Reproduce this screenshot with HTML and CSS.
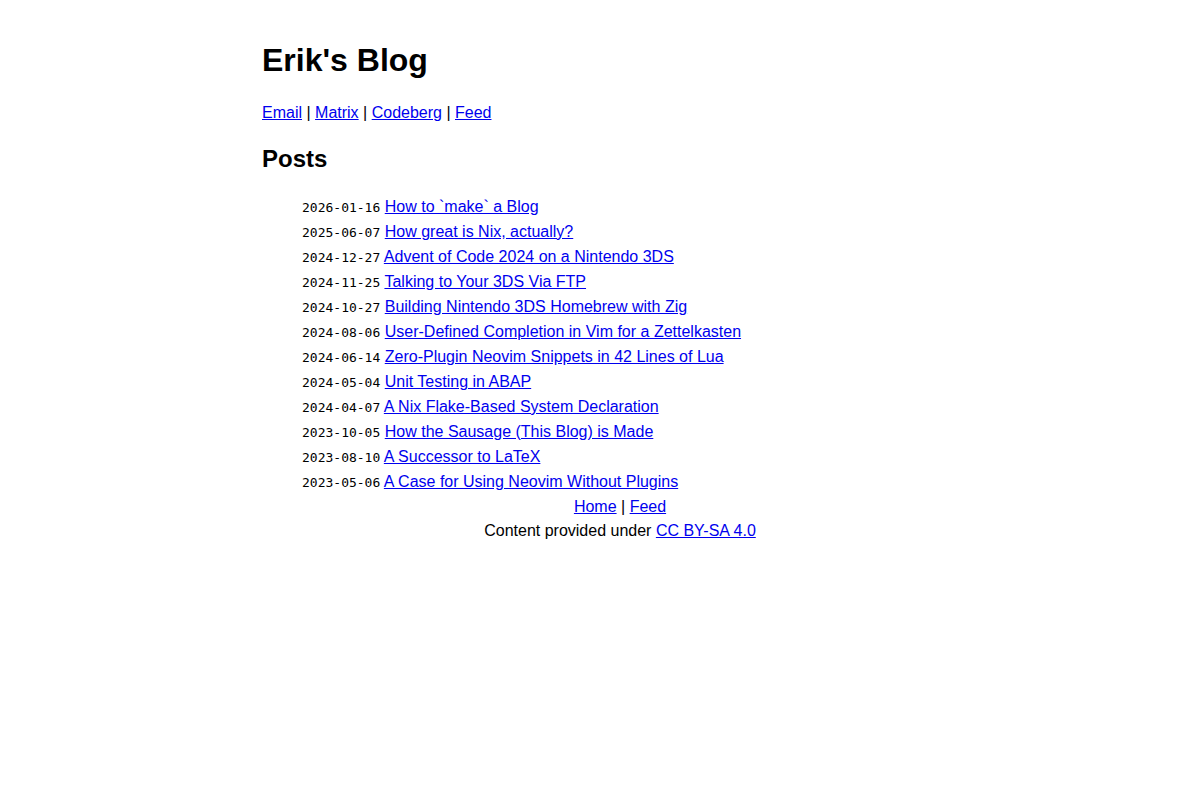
FILE: index.html
```html
<!DOCTYPE html>
<html lang="en">
<head>
<meta charset="utf-8">
<title>Erik's Blog</title>
<link rel="stylesheet" href="styles.css">
</head>
<body>
<main class="page">
  <h1 class="title">Erik's Blog</h1>
  <p class="links"><a href="#">Email</a> | <a href="#">Matrix</a> | <a href="#">Codeberg</a> | <a href="#">Feed</a></p>
  <h2 class="section">Posts</h2>
  <ul class="posts">
    <li><code>2026-01-16</code> <a href="#">How to `make` a Blog</a></li>
    <li><code>2025-06-07</code> <a href="#">How great is Nix, actually?</a></li>
    <li><code>2024-12-27</code> <a href="#">Advent of Code 2024 on a Nintendo 3DS</a></li>
    <li><code>2024-11-25</code> <a href="#">Talking to Your 3DS Via FTP</a></li>
    <li><code>2024-10-27</code> <a href="#">Building Nintendo 3DS Homebrew with Zig</a></li>
    <li><code>2024-08-06</code> <a href="#">User-Defined Completion in Vim for a Zettelkasten</a></li>
    <li><code>2024-06-14</code> <a href="#">Zero-Plugin Neovim Snippets in 42 Lines of Lua</a></li>
    <li><code>2024-05-04</code> <a href="#">Unit Testing in ABAP</a></li>
    <li><code>2024-04-07</code> <a href="#">A Nix Flake-Based System Declaration</a></li>
    <li><code>2023-10-05</code> <a href="#">How the Sausage (This Blog) is Made</a></li>
    <li><code>2023-08-10</code> <a href="#">A Successor to LaTeX</a></li>
    <li><code>2023-05-06</code> <a href="#">A Case for Using Neovim Without Plugins</a></li>
    <footer class="footer">
      <div><a href="#">Home</a> | <a href="#">Feed</a></div>
      <div>Content provided under <a href="#">CC BY-SA 4.0</a></div>
    </footer>
  </ul>
</main>
</body>
</html>
```

FILE: styles.css
```css
html, body {
  margin: 0;
  padding: 0;
  background: #fff;
}
body {
  font-family: "Liberation Sans", Arial, sans-serif;
  font-size: 16px;
  line-height: 1.5;
  color: #000;
}
.page {
  width: 676px;
  margin: 0 auto;
  padding: 8px 0;
}
a {
  color: #0000ee;
}
.title {
  font-size: 32px;
  font-weight: bold;
  margin: 28px 0 17px;
}
.links {
  margin: 17px 0 16px;
}
.section {
  font-size: 24px;
  font-weight: bold;
  margin: 16px 0;
}
.posts {
  list-style: none;
  padding-left: 40px;
  margin: 16.5px 0 16px;
}
.posts li {
  line-height: 25px;
}
.posts code {
  font-family: "DejaVu Sans Mono", monospace;
  font-size: 13px;
  line-height: 1;
}
.footer {
  text-align: center;
  line-height: 24px;
  padding-top: 1px;
}
```
